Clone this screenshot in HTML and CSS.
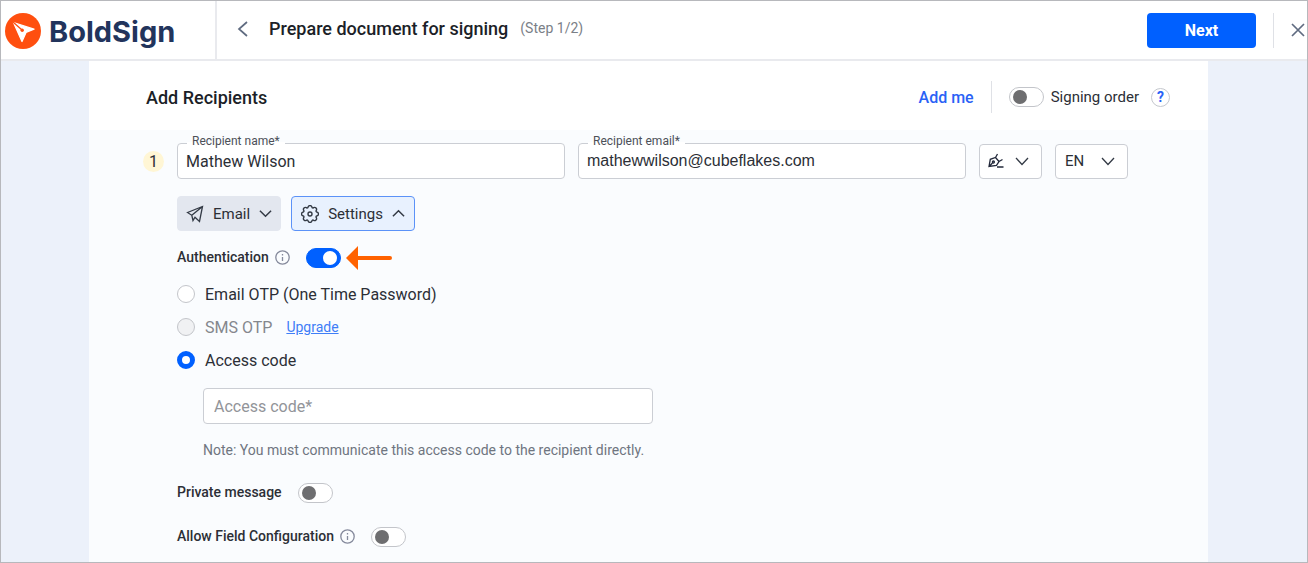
FILE: index.html
```html
<!DOCTYPE html>
<html lang="en">
<head>
  <meta charset="UTF-8">
  <meta name="viewport" content="width=device-width, initial-scale=1.0">
  <title>BoldSign - Prepare document for signing</title>
  <link rel="stylesheet" href="styles.css">
</head>
<body>
  <header class="topbar">
    <a class="brand" href="#">
      <svg class="brand-mark" viewBox="0 0 36 36" aria-hidden="true">
        <circle cx="18" cy="18" r="18" fill="#ff4f0f"/>
        <path d="M8.500 9.500 L29 16.200 L21 19.500 L17 28.500 Z" fill="#fff" stroke="#fff" stroke-linejoin="round"/>
        <path d="M8 9 L17 17" stroke="#ff4f0f" stroke-width="1.300"/>
        <circle cx="17.200" cy="17.200" r="1.700" fill="#ff4f0f"/>
      </svg>
      <span class="brand-name">BoldSign</span>
    </a>
    <button class="icon-btn back-btn" aria-label="Back">
      <svg width="12" height="18" viewBox="0 0 12 18"><path d="M10 2 L2 9 L10 16"/></svg>
    </button>
    <h1>Prepare document for signing</h1>
    <span class="step">(Step 1/2)</span>
    <button class="next-btn">Next</button>
    <div class="close-wrap">
      <button class="icon-btn" aria-label="Close">
        <svg width="14" height="14" viewBox="0 0 14 14"><path d="M1 1 L13 13 M13 1 L1 13"/></svg>
      </button>
    </div>
  </header>

  <main class="panel">
    <div class="panel-head">
      <h2>Add Recipients</h2>
      <button class="add-me">Add me</button>
      <div class="order">
        <input class="toggle" type="checkbox" id="order">
        <label for="order">Signing order</label>
        <button class="help-btn" aria-label="Help">?</button>
      </div>
    </div>

    <div class="panel-body">
      <div class="recipient">
        <span class="number">1</span>
        <div class="field">
          <label for="name">Recipient name*</label>
          <input type="text" id="name" value="Mathew Wilson">
        </div>
        <div class="field">
          <label for="email">Recipient email*</label>
          <input class="email" type="text" id="email" value="mathewwilson@cubeflakes.com">
        </div>
        <button class="role-btn" aria-label="Signer">
          <svg class="pen" width="16" height="16" viewBox="0 0 16 16">
            <path d="M1 13.500 L2.300 6.300 L7.500 4.500 L11 8.500 L8.500 12.300 Z M1 13.500 L4.500 10 M7.500 4.500 L9.500 1 M11 8.500 L14.500 6.500 M7.500 4.500 L11 8.500 M9 14 H15.500"/>
            <circle cx="5.400" cy="9" r="1"/>
          </svg>
          <svg width="14" height="9" viewBox="0 0 14 9"><path d="M1 1 L7 7.500 L13 1"/></svg>
        </button>
        <div class="lang">
          <select aria-label="Language">
            <option>EN</option>
          </select>
          <svg width="14" height="9" viewBox="0 0 14 9"><path d="M1 1 L7 7.500 L13 1"/></svg>
        </div>
      </div>

      <div class="details">
        <div class="actions">
          <button class="action-btn">
            <svg width="18" height="18" viewBox="0 0 18 18"><path d="M1.500 7.500 L16.500 1.500 L13.500 16.500 L9 12.200 L7 15.500 L5.800 10.300 Z M5.800 10.300 L16.500 1.500"/></svg>
            Email
            <svg class="chevron" width="13" height="9" viewBox="0 0 14 9"><path d="M1 1.500 L7 7.500 L13 1.500"/></svg>
          </button>
          <button class="action-btn active">
            <svg width="18" height="18" viewBox="-.5 -.5 17 17">
              <path d="M9.796 1.343c-.527-1.79-3.065-1.79-3.592 0l-.094.319a.873.873 0 0 1-1.255.52l-.292-.16c-1.64-.892-3.433.902-2.54 2.541l.159.292a.873.873 0 0 1-.52 1.255l-.319.094c-1.79.527-1.79 3.065 0 3.592l.319.094a.873.873 0 0 1 .52 1.255l-.16.292c-.892 1.64.901 3.434 2.541 2.54l.292-.159a.873.873 0 0 1 1.255.52l.094.319c.527 1.79 3.065 1.79 3.592 0l.094-.319a.873.873 0 0 1 1.255-.52l.292.16c1.64.893 3.434-.902 2.54-2.541l-.159-.292a.873.873 0 0 1 .52-1.255l.319-.094c1.79-.527 1.79-3.065 0-3.592l-.319-.094a.873.873 0 0 1-.52-1.255l.16-.292c.893-1.64-.902-3.433-2.541-2.54l-.292.159a.873.873 0 0 1-1.255-.52z"/>
              <circle cx="8" cy="8" r="1.900"/>
            </svg>
            Settings
            <svg class="chevron" width="13" height="9" viewBox="0 0 14 9"><path d="M1 7.500 L7 1.500 L13 7.500"/></svg>
          </button>
        </div>

        <div class="setting">
          <label for="auth">Authentication</label>
          <svg class="info" width="15" height="15" viewBox="0 0 15 15"><circle cx="7.500" cy="7.500" r="6.700"/><path d="M7.500 7 V11 M7.500 4 V5.400"/></svg>
          <input class="toggle" type="checkbox" id="auth" checked>
          <svg class="arrow" width="46" height="24" viewBox="0 0 46 24"><path d="M0 12 L12 0 V10 H44 Q46 10 46 12 Q46 14 44 14 H12 V24 Z"/></svg>
        </div>

        <div class="options">
          <div class="option">
            <input type="radio" name="method" id="otp">
            <label for="otp">Email OTP (One Time Password)</label>
          </div>
          <div class="option disabled">
            <input type="radio" name="method" id="sms" disabled>
            <label for="sms">SMS OTP</label>
            <a href="#">Upgrade</a>
          </div>
          <div class="option">
            <input type="radio" name="method" id="access" checked>
            <label for="access">Access code</label>
          </div>
        </div>

        <div class="access-code">
          <input type="text" placeholder="Access code*" aria-label="Access code">
          <p>Note: You must communicate this access code to the recipient directly.</p>
        </div>

        <div class="setting">
          <label for="message">Private message</label>
          <input class="toggle" type="checkbox" id="message">
        </div>
        <div class="setting">
          <label for="config">Allow Field Configuration</label>
          <svg class="info" width="15" height="15" viewBox="0 0 15 15"><circle cx="7.500" cy="7.500" r="6.700"/><path d="M7.500 7 V11 M7.500 4 V5.400"/></svg>
          <input class="toggle" type="checkbox" id="config">
        </div>
      </div>
    </div>
  </main>
</body>
</html>
```
FILE: styles.css
```css
* {
  box-sizing: border-box;
}
body {
  margin: 0;
  min-height: 100vh;
  display: flex;
  flex-direction: column;
  border: 1px solid #b7b8bc;
  background: #ecf1fa;
  color: #2c2f36;
  font-family: Roboto, sans-serif;
  font-size: 16px;
}
button,
input,
select {
  font: inherit;
  color: inherit;
}
button {
  padding: 0;
  border: none;
  background: none;
  cursor: pointer;
}
svg {
  flex: none;
  fill: none;
  stroke: #333a45;
  stroke-width: 1.3;
}
h1,
h2,
p {
  margin: 0;
}

/* top bar */
.topbar {
  display: flex;
  align-items: center;
  height: 60px;
  background: #fff;
  border-bottom: 2px solid #e9eaee;
}
.brand {
  display: flex;
  align-items: center;
  gap: 8px;
  width: 216px;
  height: 100%;
  padding: 2px 0 0 4px;
  border-right: 2px solid #e9eaee;
  text-decoration: none;
}
.brand-mark {
  width: 36px;
  height: 36px;
  stroke: none;
}
.brand-name {
  color: #22345c;
  font-family: Inter, sans-serif;
  font-size: 29px;
  font-weight: 700;
}
.icon-btn {
  display: flex;
}
.icon-btn svg {
  stroke: #5f6b80;
  stroke-width: 1.7;
}
.back-btn {
  margin: 0 20px 2px;
}
h1 {
  padding-bottom: 4px;
  font-size: 18px;
  font-weight: 500;
  color: #1c1f28;
}
.step {
  margin-left: 12px;
  padding-bottom: 4px;
  font-size: 14px;
  color: #7b7f87;
}
.next-btn {
  width: 109px;
  height: 35px;
  margin-left: auto;
  border-radius: 4px;
  background: #0060ff;
  color: #fff;
  font-weight: 700;
}
.close-wrap {
  display: flex;
  align-items: center;
  height: 35px;
  margin-left: 17px;
  padding: 0 2px 0 17px;
  border-left: 1px solid #dfe1e6;
}

/* panel */
.panel {
  flex: 1;
  display: flex;
  flex-direction: column;
  margin: 0 99px 0 88px;
  background: #fafcfe;
}
.panel-head {
  display: flex;
  align-items: center;
  height: 69px;
  padding: 3px 38px 0 57px;
  background: #fff;
}
h2 {
  flex: 1;
  font-size: 18px;
  font-weight: 500;
  color: #1c1f28;
}
.add-me {
  margin-right: 17px;
  color: #2a62f6;
  font-weight: 500;
}
.order {
  display: flex;
  align-items: center;
  height: 32px;
  padding-left: 17px;
  border-left: 1px solid #dfe1e6;
}
.order label {
  margin: 0 12px 0 7px;
  font-size: 15px;
}
.help-btn {
  width: 19px;
  height: 19px;
  border: 1px solid #c5c8ce;
  border-radius: 50%;
  color: #2a62f6;
  font-size: 14px;
  font-weight: 700;
  line-height: 16px;
}
.toggle {
  appearance: none;
  display: flex;
  align-items: center;
  width: 35px;
  height: 20px;
  margin: 0;
  padding: 0 3px;
  border: 1px solid #c3c5ca;
  border-radius: 10px;
  background: #fff;
}
.toggle::before {
  content: "";
  width: 14px;
  height: 14px;
  border-radius: 50%;
  background: #6e6e70;
}
.toggle:checked {
  justify-content: flex-end;
  border-color: #0060ff;
  background: #0060ff;
}
.toggle:checked::before {
  background: #fff;
}

/* recipient row */
.panel-body {
  padding: 13px 80px 13px 54px;
}
.recipient {
  display: flex;
  align-items: center;
  gap: 13px;
}
.number {
  width: 21px;
  height: 21px;
  border-radius: 50%;
  background: #fff6d5;
  line-height: 21px;
  text-align: center;
}
.field {
  position: relative;
  flex: 1;
}
.field label {
  position: absolute;
  top: -9px;
  left: 10px;
  padding: 0 5px;
  background: linear-gradient(#fafcfe 60%, #fff 60%);
  font-size: 12px;
  line-height: 14px;
  color: #4c5058;
}
.field input,
.access-code input {
  display: block;
  width: 100%;
  height: 36px;
  padding: 0 8px;
  border: 1px solid #cbced4;
  border-radius: 4px;
  background: #fff;
}
.field .email {
  font-family: "Liberation Sans", sans-serif;
}
.role-btn,
.lang {
  display: flex;
  align-items: center;
  height: 35px;
  border: 1px solid #cbced4;
  border-radius: 4px;
  background: #fff;
}
.role-btn {
  gap: 11px;
  padding: 0 12px 0 8px;
}
.pen {
  stroke: #22283a;
}
.lang {
  position: relative;
  width: 73px;
}
.lang select {
  appearance: none;
  width: 100%;
  height: 100%;
  padding: 0 9px;
  border: none;
  background: none;
  font-size: 15px;
}
.lang svg {
  position: absolute;
  right: 12px;
  pointer-events: none;
}

/* recipient settings */
.details {
  padding: 17px 0 0 34px;
}
.actions {
  display: flex;
  gap: 10px;
  margin-bottom: 15px;
}
.action-btn {
  display: flex;
  align-items: center;
  gap: 9px;
  height: 35px;
  padding: 0 8px;
  border: 1px solid #e3e7ef;
  border-radius: 4px;
  background: #e3e7ef;
  font-size: 15px;
}
.action-btn.active {
  padding: 0 9px;
  border-color: #5b92f8;
  background: #e8f1fe;
}
.action-btn .chevron {
  stroke-width: 1.6;
}
.setting {
  display: flex;
  align-items: center;
  height: 24px;
  margin-bottom: 20px;
  font-size: 14px;
  font-weight: 500;
}
.setting:last-child {
  margin-bottom: 0;
}
.setting label {
  padding-bottom: 3px;
}
.setting .toggle {
  margin: 0 0 0 16px;
}
.info {
  margin: 0 0 2px 6px;
  stroke: #858a9c;
}
.arrow {
  margin-left: 5px;
  fill: #ff6200;
  stroke: none;
}
.options {
  display: grid;
  gap: 13px;
  margin: -6px 0 18px;
}
.option {
  display: flex;
  align-items: center;
  height: 20px;
}
.option input {
  appearance: none;
  width: 18px;
  height: 18px;
  margin: 0 10px 0 0;
  border: 1px solid #c3c5ca;
  border-radius: 50%;
  background: #fff;
}
.option input:checked {
  border: 5px solid #0060ff;
}
.option input:disabled {
  background: #f0f1f3;
}
.disabled {
  color: #84878d;
}
.option a {
  margin-left: 14px;
  font-size: 14px;
  color: #3f7ef7;
}
.access-code {
  max-width: 476px;
  margin-bottom: 21px;
  padding-left: 26px;
}
.access-code input {
  padding: 0 10px;
}
.access-code input::placeholder {
  color: #929499;
}
.access-code p {
  margin-top: 16px;
  font-size: 14px;
  line-height: 20px;
  color: #6f7580;
}
```
